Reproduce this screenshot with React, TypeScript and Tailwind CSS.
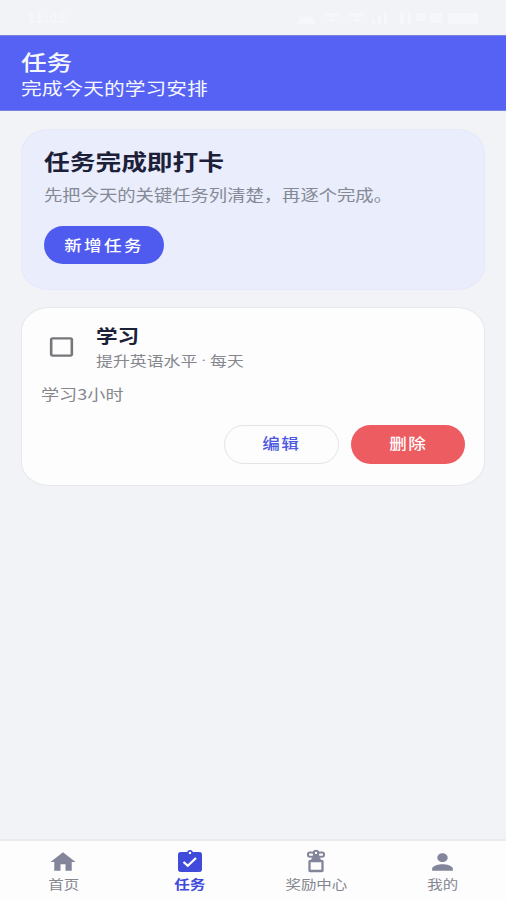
import type { ReactNode } from "react";
import { MdCheckBoxOutlineBlank, MdHome, MdPerson } from "react-icons/md";

function Wide({ children, className = "" }: { children: ReactNode; className?: string }) {
  return <div className={`w-max origin-left whitespace-nowrap ${className}`}>{children}</div>;
}

function StatusBar() {
  return (
    <div className="flex h-[35px] items-center justify-between pr-[24px] pl-[27px] text-[#f6f7fa]">
      <div className="text-[14px] font-bold tracking-wide">11:05</div>
      <svg width="188" height="16" viewBox="0 0 188 16" fill="currentColor">
        <path d="M2 14q2-7 10-8q8 1 10 8z" />
        <path d="M29 3h18l-3 4h-12zM34 9h8l-4 4zM53 3h20l-4 4h-12zM58 9h10l-5 4z" />
        <path d="M78 10h3v4h-3zM84 6h3v8h-3zM90 2h3v12h-3zM106 2h4v12h-4zM114 2h3v12h-3zM122 3h10v8h-10zM136 3h12v10h-12zM154 3h30v11h-30z" />
      </svg>
    </div>
  );
}

function ClipboardIcon() {
  return (
    <svg className="mb-[2px]" width="24" height="22" viewBox="0 0 24 22" fill="none" stroke="currentColor">
      <rect x="0.500" y="2.500" width="23" height="19" rx="1.800" fill="currentColor" />
      <circle cx="12" cy="3" r="2.100" fill="#fdfdfe" strokeWidth="1.600" />
      <path d="M8 5.200h8" strokeWidth="1.500" />
      <path d="M5.500 12l4.300 3.800L18 8" stroke="#fdfdfe" strokeWidth="2.300" />
    </svg>
  );
}

function GiftIcon() {
  return (
    <svg className="mb-[2px]" width="20" height="24" viewBox="0 0 20 24" fill="none" stroke="currentColor">
      <rect x="2" y="3.400" width="6" height="4.400" rx="1.800" strokeWidth="2" />
      <rect x="12" y="3.400" width="6" height="4.400" rx="1.800" strokeWidth="2" />
      <circle cx="10" cy="3.900" r="2.200" strokeWidth="2" fill="#fdfdfe" />
      <path d="M5.500 10.500L8 7h4l2.500 3.500z" fill="currentColor" strokeWidth="1" />
      <rect x="3.500" y="12" width="13" height="10" rx="0.600" strokeWidth="2.300" />
    </svg>
  );
}

function Tab({ label, icon, active = false }: { label: string; icon: ReactNode; active?: boolean }) {
  return (
    <div className={`flex flex-1 flex-col items-center ${active ? "font-bold text-[#414bdb]" : "text-[#83869b]"}`}>
      <div className="flex h-[26px] items-center justify-center">{icon}</div>
      <div className={`scale-x-[1.22] text-[12.700px] leading-[18px] ${active ? "" : "text-[#85878f]"}`}>{label}</div>
    </div>
  );
}

export default function App() {
  return (
    <div className="flex h-[900px] w-full flex-col bg-[#f1f3f7] font-['Noto_Sans_CJK_SC',sans-serif]">
      <StatusBar />
      <header className="h-[76px] border-y border-[#7882df] bg-[#5562f3] pt-[11px] pl-[21px] text-[#f5f7ff]">
        <Wide className="scale-x-[1.22] text-[21px] leading-[28px] font-medium">任务</Wide>
        <Wide className="scale-x-[1.22] text-[17px] leading-[25px]">完成今天的学习安排</Wide>
      </header>
      <main className="flex flex-1 flex-col gap-[17px] px-[21px] pt-[18px]">
        <section className="h-[161px] rounded-[28px/24px] border border-[#e6e8fa] bg-[#e9edfc] pt-[16px] pl-[22px]">
          <Wide className="scale-x-[1.21] text-[21.250px] leading-[30px] font-bold text-[#1c2039]">任务完成即打卡</Wide>
          <Wide className="mt-[7px] scale-x-[1.19] text-[15.400px] leading-[22px] text-[#858994]">先把今天的关键任务列清楚，再逐个完成。</Wide>
          <button className="mt-[21px] flex h-[38px] w-[120px] items-center justify-center rounded-full bg-[#4f5bee] text-white">
            <span className="scale-x-[1.17] text-[15px] font-medium tracking-[2px]">新增任务</span>
          </button>
        </section>
        <section className="h-[179px] rounded-[28px/24px] border border-[#e7e8ec] bg-[#fdfdfe] pr-[19px] pl-[19px] pt-[14px]">
          <div className="flex">
            <MdCheckBoxOutlineBlank className="mt-[12px] ml-[5px] h-[26px] w-[31px] text-[#77777b]" preserveAspectRatio="none" />
            <div className="ml-[19px]">
              <Wide className="scale-x-[1.2] text-[18px] leading-[26px] font-bold text-[#1c2039]">学习</Wide>
              <Wide className="scale-x-[1.19] text-[14.200px] leading-[24px] text-[#85878d]">
                提升英语水平<span className="font-[Roboto]"> · </span>每天
              </Wide>
            </div>
          </div>
          <Wide className="mt-[8px] scale-x-[1.2] text-[15.100px] leading-[24px] text-[#85878d]">学习3小时</Wide>
          <div className="mt-[20px] flex justify-end gap-[12px]">
            <button className="flex h-[39px] w-[115px] items-center justify-center rounded-full border-[1.500px] border-[#e3e4e8] text-[#4c58df]">
              <span className="scale-x-[1.17] pb-[2px] text-[15px] font-medium tracking-[1.300px]">编辑</span>
            </button>
            <button className="flex h-[39px] w-[114px] items-center justify-center rounded-full bg-[#ed5c60] text-white">
              <span className="scale-x-[1.17] pb-[2px] text-[15px] font-medium tracking-[1.300px]">删除</span>
            </button>
          </div>
        </section>
      </main>
      <nav className="flex h-[61px] border-t-2 border-[#eaebef] bg-[#fdfdfe] pt-[8px]">
        <Tab label="首页" icon={<MdHome className="h-[26px] w-[30px]" preserveAspectRatio="none" />} />
        <Tab label="任务" active icon={<ClipboardIcon />} />
        <Tab label="奖励中心" icon={<GiftIcon />} />
        <Tab label="我的" icon={<MdPerson className="h-[26px] w-[31px]" preserveAspectRatio="none" />} />
      </nav>
    </div>
  );
}
